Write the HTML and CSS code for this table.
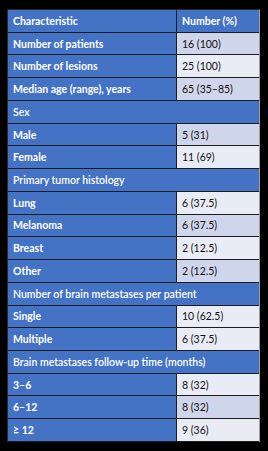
FILE: index.html
```html
<!DOCTYPE html>
<html>
<head>
<meta charset="utf-8">
<link rel="stylesheet" href="styles.css">
</head>
<body>
<div class="tbl">
  <div class="row head"><div class="c1">Characteristic</div><div class="c2">Number (%)</div></div>
  <div class="row"><div class="c1">Number of patients</div><div class="c2 dk">16 (100)</div></div>
  <div class="row"><div class="c1">Number of lesions</div><div class="c2 lt">25 (100)</div></div>
  <div class="row"><div class="c1">Median age (range), years</div><div class="c2 dk">65 (35–85)</div></div>
  <div class="row"><div class="span">Sex</div></div>
  <div class="row"><div class="c1">Male</div><div class="c2 dk">5 (31)</div></div>
  <div class="row"><div class="c1">Female</div><div class="c2 lt">11 (69)</div></div>
  <div class="row"><div class="span">Primary tumor histology</div></div>
  <div class="row"><div class="c1">Lung</div><div class="c2 lt">6 (37.5)</div></div>
  <div class="row"><div class="c1">Melanoma</div><div class="c2 dk">6 (37.5)</div></div>
  <div class="row"><div class="c1">Breast</div><div class="c2 lt">2 (12.5)</div></div>
  <div class="row"><div class="c1">Other</div><div class="c2 dk">2 (12.5)</div></div>
  <div class="row"><div class="span">Number of brain metastases per patient</div></div>
  <div class="row"><div class="c1">Single</div><div class="c2 lt">10 (62.5)</div></div>
  <div class="row"><div class="c1">Multiple</div><div class="c2 lt">6 (37.5)</div></div>
  <div class="row"><div class="span">Brain metastases follow-up time (months)</div></div>
  <div class="row"><div class="c1">3–6</div><div class="c2 lt">8 (32)</div></div>
  <div class="row"><div class="c1">6–12</div><div class="c2 dk">8 (32)</div></div>
  <div class="row last"><div class="c1">≥ 12</div><div class="c2 lt">9 (36)</div></div>
</div>
</body>
</html>
```
FILE: styles.css
```css
html, body {
  margin: 0;
  background: #000;
}
body {
  padding: 9px 0 0 7px;
  font-family: Lato, "Liberation Sans", sans-serif;
  font-size: 10.5px;
}
.tbl {
  width: 253px;
  box-sizing: border-box;
  border-top: 1px solid #2a2a2a;
  border-left: 1px solid #2a2a2a;
  border-right: 1px solid #9c9c9c;
  box-shadow: 0 1px 0 #d8d8d8;
  display: flex;
  flex-direction: column;
}
.row {
  display: grid;
  grid-template-columns: 169px 82px;
  height: 22.74px;
  box-sizing: border-box;
  border-bottom: 1px solid #1c1c1c;
  background: #4472c4;
}
.c1, .span, .c2 {
  display: flex;
  align-items: center;
  padding-left: 5px;
  white-space: nowrap;
}
.c1, .span {
  color: #fff;
  font-weight: 700;
}
.c1 {
  grid-column: 1;
  border-right: 1px solid #1c1c1c;
}
.span {
  grid-column: 1 / 3;
  font-weight: 600;
}
.c2 {
  grid-column: 2;
  color: #111;
}
.head .c2 { color: #fff; font-weight: 700; }
.dk { background: #cfd5ea; }
.lt { background: #e9ebf5; }
```
